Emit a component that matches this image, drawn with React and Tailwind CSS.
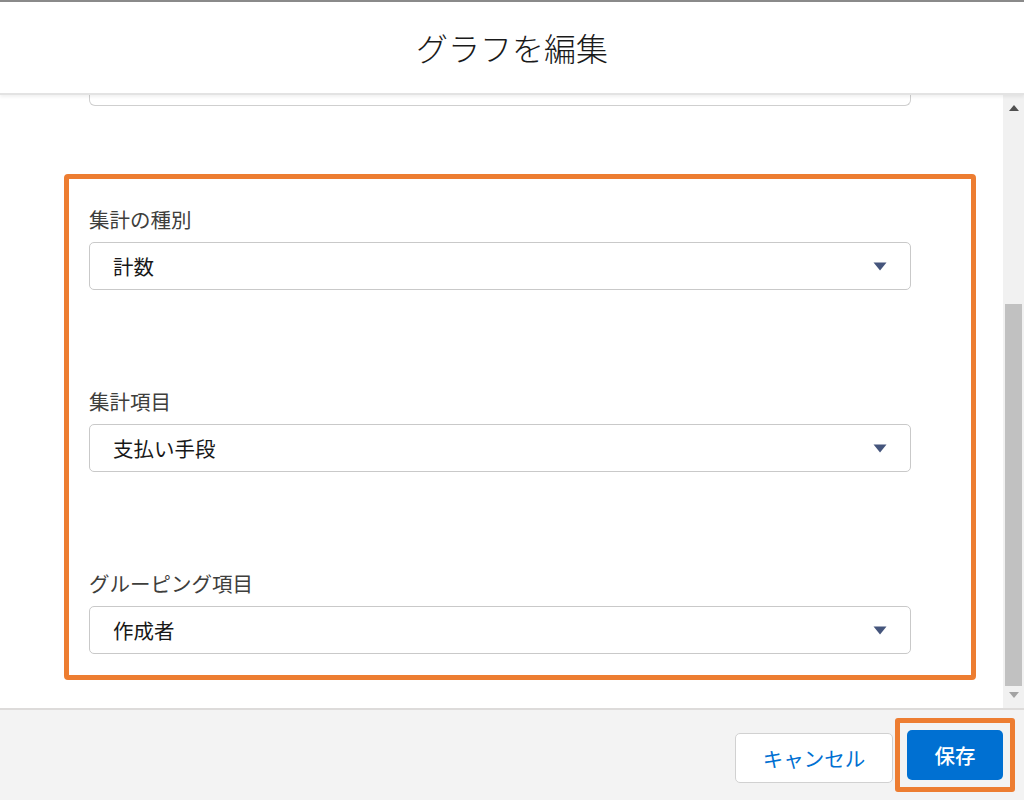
import React from "react";

const FONT = { fontFamily: '"Noto Sans CJK JP", "Noto Sans", sans-serif' };

function Caret() {
  return (
    <svg width="14" height="9" viewBox="0 0 14 9" className="shrink-0">
      <path d="M0.5 0.5 L13.5 0.5 L7 8.5 Z" fill="#45557c" />
    </svg>
  );
}

function Field({ label, value, gap }) {
  return (
    <div className={gap}>
      <div className="h-[24px] leading-[24px] text-[20.5px] text-[#3e3e3c]">{label}</div>
      <div className="mt-[11px] h-[48px] w-[822px] rounded-[5px] border border-[#c9c9c9] bg-white flex items-center justify-between pl-[23px] pr-[23px]">
        <span className="text-[20.5px] text-[#181818]">{value}</span>
        <Caret />
      </div>
    </div>
  );
}

export default function App() {
  return (
    <div className="w-[1024px] h-[800px] flex flex-col bg-white overflow-hidden" style={FONT}>
      {/* header */}
      <div className="h-[95px] shrink-0 border-t-2 border-t-[#8a8a8a] border-b-2 border-b-[#e3e3e3] bg-white flex items-center justify-center relative z-10 shadow-[0_2px_3px_rgba(0,0,0,0.06)]">
        <span className="text-[32px] font-light text-[#1a1a1a] leading-none -mt-[1px]">グラフを編集</span>
      </div>

      {/* body */}
      <div className="flex-1 flex min-h-0">
        <div className="flex-1 pl-[64px] overflow-hidden">
          <div className="ml-[25px] w-[822px] h-[11px] border border-t-0 border-[#cfcfcf] rounded-b-[6px]" />
          <div className="mt-[68px] w-[912px] h-[506px] border-[5px] border-[#ed7d31] rounded-[4px] pl-[20px] pt-[28px]">
            <Field gap="" label="集計の種別" value="計数" />
            <Field gap="mt-[99px]" label="集計項目" value="支払い手段" />
            <Field gap="mt-[99px]" label="グルーピング項目" value="作成者" />
          </div>
        </div>
        {/* scrollbar */}
        <div className="w-[21px] shrink-0 bg-[#f1f1f1] flex flex-col items-center">
          <svg width="10" height="6" viewBox="0 0 10 6" className="mt-[10px]">
            <path d="M0 6 L10 6 L5 0 Z" fill="#505050" />
          </svg>
          <div className="mt-[193px] w-[17px] h-[382px] bg-[#c1c1c1]" />
          <svg width="10" height="6" viewBox="0 0 10 6" className="mt-[6px]">
            <path d="M0 0 L10 0 L5 6 Z" fill="#a3a3a3" />
          </svg>
        </div>
      </div>

      {/* footer */}
      <div className="h-[92px] shrink-0 bg-[#f3f3f3] border-t-2 border-[#dddbda] flex items-center justify-end pr-[9px]">
        <button className="mt-[6px] h-[50px] w-[158px] rounded-[5px] border border-[#d1d1d1] bg-white text-[20.5px] text-[#0070d2]">
          キャンセル
        </button>
        <div className="ml-[2px] border-[5px] border-[#ed7d31] rounded-[3px] p-[7px]">
          <button className="h-[50px] w-[96px] rounded-[5px] bg-[#0070d2] text-white text-[20.5px] font-medium flex items-center justify-center">
            保存
          </button>
        </div>
      </div>
    </div>
  );
}
